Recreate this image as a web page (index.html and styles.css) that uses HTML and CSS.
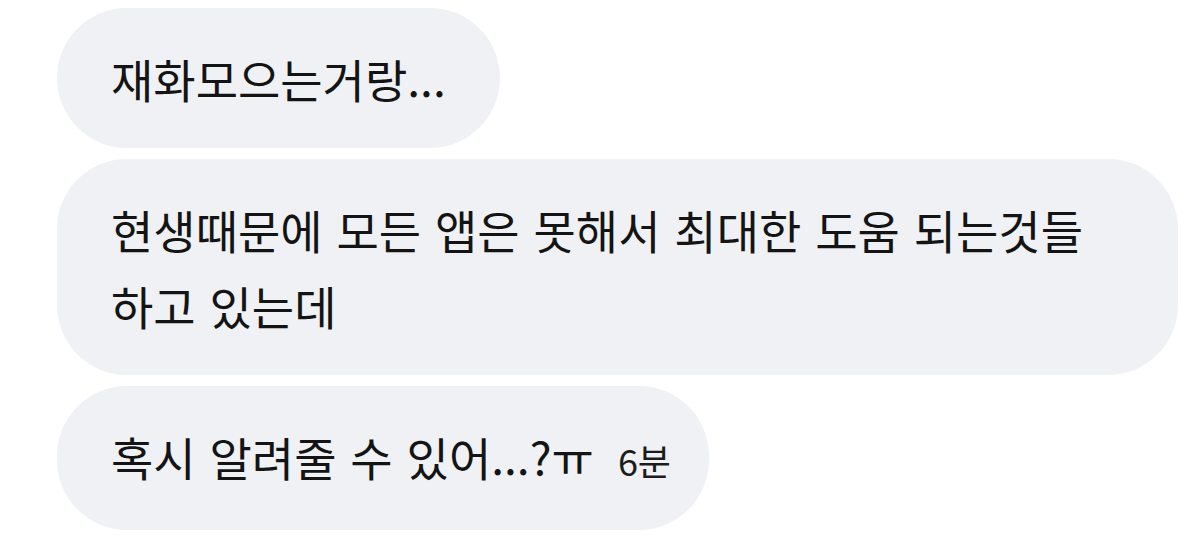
FILE: index.html
```html
<!DOCTYPE html>
<html lang="ko">
<head>
<meta charset="utf-8">
<link rel="stylesheet" href="styles.css">
</head>
<body>
<div class="chat">
  <div class="bubble">재화모으는거랑...</div>
  <div class="bubble">현생때문에 모든 앱은 못해서 최대한 도움 되는것들 하고 있는데</div>
  <div class="bubble bubble--last">혹시 알려줄 수 있어...?ㅠ<span class="time">6분</span></div>
</div>
</body>
</html>
```
FILE: styles.css
```css
html, body {
  margin: 0;
  padding: 0;
  background: #ffffff;
  width: 1200px;
  height: 550px;
  overflow: hidden;
}

.chat {
  display: flex;
  flex-direction: column;
  align-items: flex-start;
  gap: 11px;
  padding: 8px 0 0 57px;
  font-family: "Noto Sans CJK KR", "Noto Sans", sans-serif;
  font-size: 46px;
  font-weight: 400;
  color: #141414;
}

.bubble {
  box-sizing: border-box;
  max-width: 1121px;
  padding: 32px 54px 32px 54px;
  line-height: 76px;
  background: #eff1f4;
  border-radius: 70px;
  word-break: keep-all;
  word-spacing: 1px;
}

.bubble--last {
  padding-right: 38px;
}

.time {
  margin-left: 24px;
  font-size: 36px;
  color: #1c1c1c;
}
```
